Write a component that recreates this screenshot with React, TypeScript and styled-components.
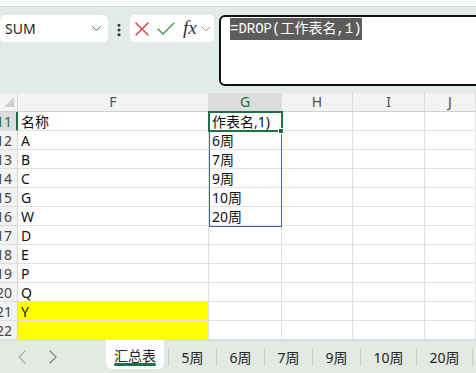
import React from 'react';
import styled, { createGlobalStyle } from 'styled-components';
import { ChevronDown, ChevronLeft, ChevronRight, X, Check, EllipsisVertical } from 'lucide-react';

const Global = createGlobalStyle`
  html, body { margin: 0; padding: 0; background: #fff; }
  body { font-family: "Noto Sans", "Noto Sans CJK SC", sans-serif; }
  * { box-sizing: border-box; }
`;

const GREEN = '#1e7145';
const COLS = '18px 191px 73px 71px 72px 1fr';

const Page = styled.div`
  width: 476px;
  height: 373px;
  overflow: hidden;
  display: flex;
  flex-direction: column;
`;

const TopStrip = styled.div`
  height: 7px;
  flex-shrink: 0;
  background: #f8fafa;
  border-bottom: 1px solid #d3dada;
`;

const FormulaBar = styled.div`
  height: 86px;
  flex-shrink: 0;
  background: #e2eaea;
  display: flex;
  align-items: flex-start;
  padding-top: 8px;
  overflow: hidden;
`;

const NameBox = styled.div`
  width: 108px;
  height: 27px;
  flex-shrink: 0;
  background: #fff;
  border-radius: 5px;
  display: flex;
  align-items: center;
  justify-content: space-between;
  padding: 0 4px 0 5px;
  font-size: 14px;
  color: #1f1f1f;
`;

const Kebab = styled.div`
  width: 22px;
  height: 27px;
  flex-shrink: 0;
  display: flex;
  align-items: center;
  justify-content: center;
  color: #333;
  padding-top: 3px;
`;

const FxBox = styled.div`
  width: 84px;
  height: 27px;
  flex-shrink: 0;
  background: #fff;
  border-radius: 5px;
  display: flex;
  align-items: center;
`;

const FxText = styled.span`
  font-family: "Liberation Serif", serif;
  font-style: italic;
  font-size: 19px;
  color: #333;
  margin-left: 5px;
  line-height: 1;
  margin-top: -2px;
`;

const FormulaInput = styled.div`
  width: 280px;
  height: 71px;
  flex-shrink: 0;
  margin-left: 5px;
  background: #fff;
  border: 2px solid #111;
  border-radius: 6px;
  padding: 1px 9px;
  font-family: "Liberation Mono", "Noto Sans CJK SC", monospace;
  font-size: 14px;
  line-height: 22px;
`;

const Highlight = styled.span`
  background: #5c5c5c;
  color: #fff;
  display: inline-block;
  line-height: 22px;
`;

const GridArea = styled.div`
  position: relative;
  flex-shrink: 0;
`;

const Row = styled.div`
  display: grid;
  grid-template-columns: ${COLS};
  height: 19px;
`;

const Corner = styled.div`
  background: #f3f3f3;
  border-right: 1px solid #d6d6d6;
  border-bottom: 1px solid #cfcfcf;
  display: flex;
  align-items: flex-end;
  justify-content: flex-end;
  padding: 0 3px 4px 0;
`;

const Triangle = styled.div`
  width: 0;
  height: 0;
  border-left: 10px solid transparent;
  border-bottom: 10px solid #d0d0d0;
`;

const ColHead = styled.div<{ $sel?: boolean }>`
  background: ${(p) => (p.$sel ? '#dcdcdc' : '#f3f3f3')};
  color: ${(p) => (p.$sel ? GREEN : '#505050')};
  border-right: 1px solid #dadada;
  border-bottom: 1px solid #cfcfcf;
  font-size: 14px;
  line-height: 18px;
  text-align: center;
`;

const RowHead = styled.div<{ $sel?: boolean }>`
  background: ${(p) => (p.$sel ? '#dcdcdc' : '#f3f3f3')};
  color: ${(p) => (p.$sel ? GREEN : '#444')};
  border-right: ${(p) => (p.$sel ? `2px solid ${GREEN}` : '1px solid #d6d6d6')};
  border-bottom: 1px solid #dedede;
  font-size: 14px;
  display: flex;
  justify-content: flex-end;
  align-items: center;
  padding-right: ${(p) => (p.$sel ? 4 : 5)}px;
  overflow: hidden;
  white-space: nowrap;
`;

const Cell = styled.div<{ $fill?: string }>`
  background: ${(p) => p.$fill || '#fff'};
  border-right: 1px solid #e1e1e1;
  border-bottom: 1px solid #e1e1e1;
  font-size: 14px;
  line-height: 19px;
  color: #111;
  padding-left: 3px;
  white-space: nowrap;
  overflow: hidden;
`;

const GreenSel = styled.div`
  position: absolute;
  left: 208px;
  top: 18px;
  width: 75px;
  height: 21px;
  border: 2px solid ${GREEN};
  pointer-events: none;
`;

const FillHandle = styled.div`
  position: absolute;
  left: 278px;
  top: 35px;
  width: 6px;
  height: 6px;
  background: ${GREEN};
  border: 1px solid #fff;
`;

const BlueSel = styled.div`
  position: absolute;
  left: 209px;
  top: 38px;
  width: 73px;
  height: 96px;
  border: 1px solid #3a65b3;
  pointer-events: none;
`;

const TabBar = styled.div`
  height: 33px;
  flex-shrink: 0;
  background: #e3eae3;
  display: flex;
  align-items: flex-start;
  font-size: 14px;
  color: #262626;
  box-shadow: inset 0 1px 0 #d8ded8;
`;

const Nav = styled.div`
  width: 106px;
  height: 33px;
  display: flex;
  align-items: center;
  padding-left: 10px;
  gap: 7px;
  flex-shrink: 0;
`;

const Tab = styled.div<{ $active?: boolean }>`
  position: relative;
  flex-shrink: 0;
  display: flex;
  align-items: center;
  white-space: nowrap;
  height: ${(p) => (p.$active ? 29 : 33)}px;
  padding: 0 ${(p) => (p.$active ? 8 : 12.5)}px;
  background: ${(p) => (p.$active ? '#fff' : 'transparent')};
  border-radius: ${(p) => (p.$active ? '0 0 6px 6px' : '0')};
  margin-right: ${(p) => (p.$active ? 4 : 0)}px;
  ${(p) =>
    p.$active &&
    `
    &::after {
      content: '';
      position: absolute;
      left: 8px;
      right: 8px;
      bottom: 3px;
      height: 3px;
      border-radius: 2px;
      background: ${GREEN};
    }
  `}
`;

const TabSep = styled.div`
  width: 1px;
  height: 18px;
  margin-top: 8px;
  flex-shrink: 0;
  background: #c6cdc6;
`;

const rowsData: { n: number; f: string; g: string; fill?: string }[] = [
  { n: 11, f: '名称', g: '作表名,1)' },
  { n: 12, f: 'A', g: '6周' },
  { n: 13, f: 'B', g: '7周' },
  { n: 14, f: 'C', g: '9周' },
  { n: 15, f: 'G', g: '10周' },
  { n: 16, f: 'W', g: '20周' },
  { n: 17, f: 'D', g: '' },
  { n: 18, f: 'E', g: '' },
  { n: 19, f: 'P', g: '' },
  { n: 20, f: 'Q', g: '' },
  { n: 21, f: 'Y', g: '', fill: '#ffff00' },
  { n: 22, f: '', g: '', fill: '#ffff00' },
];

const tabs = ['5周', '6周', '7周', '9周', '10周', '20周'];

export default function App() {
  return (
    <Page>
      <Global />
      <TopStrip />
      <FormulaBar>
        <NameBox>
          <span>SUM</span>
          <ChevronDown size={15} strokeWidth={1.5} color="#555" />
        </NameBox>
        <Kebab>
          <EllipsisVertical size={16} strokeWidth={2.6} />
        </Kebab>
        <FxBox>
          <X size={24} strokeWidth={1.4} color="#dc3f3a" />
          <Check size={24} strokeWidth={1.4} color="#3a9a52" />
          <FxText>fx</FxText>
          <ChevronDown size={16} strokeWidth={1.4} color="#999" style={{ marginLeft: 1 }} />
        </FxBox>
        <FormulaInput>
          <Highlight>=DROP(工作表名,1)</Highlight>
        </FormulaInput>
      </FormulaBar>
      <GridArea>
        <Row>
          <Corner>
            <Triangle />
          </Corner>
          <ColHead>F</ColHead>
          <ColHead $sel>G</ColHead>
          <ColHead>H</ColHead>
          <ColHead>I</ColHead>
          <ColHead>J</ColHead>
        </Row>
        {rowsData.map((r) => (
          <Row key={r.n}>
            <RowHead $sel={r.n === 11}>{r.n}</RowHead>
            <Cell $fill={r.fill}>{r.f}</Cell>
            <Cell>{r.g}</Cell>
            <Cell />
            <Cell />
            <Cell />
          </Row>
        ))}
        <BlueSel />
        <GreenSel />
        <FillHandle />
      </GridArea>
      <TabBar>
        <Nav>
          <ChevronLeft size={24} strokeWidth={1.3} color="#aaa" />
          <ChevronRight size={24} strokeWidth={1.3} color="#888" />
        </Nav>
        <Tab $active>汇总表</Tab>
        {tabs.map((t) => (
          <React.Fragment key={t}>
            <TabSep />
            <Tab>{t}</Tab>
          </React.Fragment>
        ))}
        <TabSep />
      </TabBar>
    </Page>
  );
}
